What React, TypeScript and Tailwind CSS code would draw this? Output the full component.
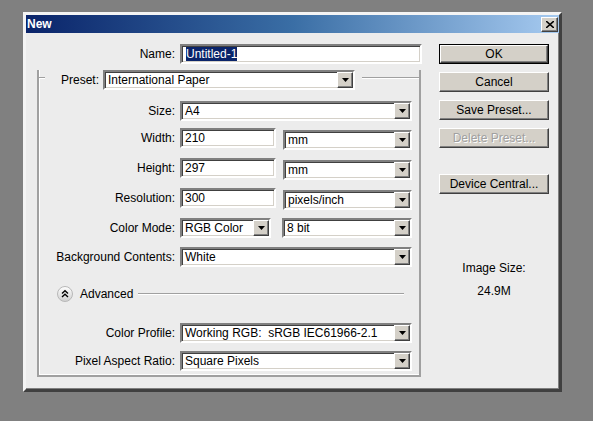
import React from 'react';

const font = 'font-["Liberation_Sans",Arial,sans-serif] text-[12px] leading-[14px] text-black';

const sunken =
  'border-2 border-t-[#808080] border-l-[#808080] border-r-white border-b-white shadow-[inset_1px_1px_0_#404040,inset_-1px_-1px_0_#d4d0c8] bg-white';

const raised =
  'bg-[#d4d0c8] border border-t-white border-l-white border-r-[#404040] border-b-[#404040] shadow-[inset_-1px_-1px_0_#808080]';

function Arrow() {
  return (
    <svg width="7" height="4" viewBox="0 0 7 4">
      <path d="M0 0h7L3.5 4z" fill="#000" />
    </svg>
  );
}

function Combo({ value, width }: { value: string; width: number }) {
  return (
    <div
      className={`${sunken} h-[20px] flex items-center shrink-0`}
      style={{ width }}
    >
      <span className="flex-1 pl-[3px] whitespace-pre overflow-hidden">{value}</span>
      <div className={`${raised} w-[16px] h-[16px] flex items-center justify-center`}>
        <Arrow />
      </div>
    </div>
  );
}

function TextBox({ value, width }: { value: string; width: number }) {
  return (
    <div className={`${sunken} h-[20px] flex items-center pl-[3px] shrink-0`} style={{ width }}>
      {value}
    </div>
  );
}

function Label({ text, width }: { text: string; width: number }) {
  return (
    <span className="shrink-0 text-right pr-[5px] whitespace-nowrap" style={{ width }}>
      {text}
    </span>
  );
}

function Row({ label, children, top }: { label: string; children: React.ReactNode; top: string }) {
  return (
    <div className={`flex items-start ${top}`}>
      <div className="h-[20px] flex items-center">
        <Label text={label} width={141} />
      </div>
      {children}
    </div>
  );
}

function Btn({ label, disabled, primary, className = '' }: { label: string; disabled?: boolean; primary?: boolean; className?: string }) {
  return (
    <div className={`w-[110px] h-[20px] ${primary ? 'border border-black' : ''} ${className}`}>
      <div className={`${raised} h-full w-full flex items-center justify-center`}>
        <span className={disabled ? 'text-[#a0a0a0] [text-shadow:1px_1px_0_#fff]' : ''}>{label}</span>
      </div>
    </div>
  );
}

function AdvancedIcon() {
  return (
    <svg width="16" height="16" viewBox="0 0 16 16">
      <defs>
        <linearGradient id="adv" x1="0" y1="0" x2="0" y2="1">
          <stop offset="0" stopColor="#ffffff" />
          <stop offset="1" stopColor="#cfcfcf" />
        </linearGradient>
      </defs>
      <circle cx="8" cy="8" r="7.5" fill="url(#adv)" stroke="#b8b8b8" />
      <path d="M5 7.5L8 4.8 11 7.5M5 11L8 8.3 11 11" fill="none" stroke="#000" strokeWidth="1.4" />
    </svg>
  );
}

export default function App() {
  return (
    <div className={`w-[593px] h-[421px] bg-[#808080] pt-[12px] pl-[23px] ${font}`}>
      <div className="w-[539px] h-[380px] bg-[#ececec] border-[3px] border-t-[#f4f4f4] border-l-[#f4f4f4] border-r-[#404040] border-b-[#404040] shadow-[inset_-1px_-1px_0_#808080] flex flex-col">
        {/* title bar */}
        <div className="h-[18px] shrink-0 bg-[linear-gradient(to_right,#0a246a,#3a6ea5_50%,#a6caf0)] flex items-center justify-between pl-[1px] pr-[1px]">
          <span className="text-white font-bold">New</span>
          <div className={`${raised} w-[17px] h-[15px] flex items-center justify-center`}>
            <svg width="8" height="7" viewBox="0 0 8 7">
              <path d="M0 0l8 7M8 0L0 7" stroke="#000" strokeWidth="1.6" />
            </svg>
          </div>
        </div>

        <div className="flex flex-1">
          {/* left column */}
          <div className="pl-[11px] pt-[11px] w-[395px] shrink-0">
            <div className="flex items-center h-[20px]">
              <Label text="Name:" width={143} />
              <div className={`${sunken} h-[20px] w-[242px] shrink-0 flex items-center pl-[4px]`}>
                <span className="bg-[#0a246a] text-white leading-[14px]">Untitled-1</span>
              </div>
            </div>

            {/* preset group */}
            <div className="mt-[13px] w-[384px] border-2 border-t-0 border-l-[#a0a0a0] border-b-[#a0a0a0] border-r-[#a0a0a0] shadow-[inset_1px_0_0_#fff,inset_0_-1px_0_#fff] pb-[4px]">
              <div className="flex items-start -mt-[7px] h-[20px]">
                <span className="w-[6px] mt-[7px] h-[2px] border-t border-t-[#a0a0a0] border-b border-b-white" />
                <span className="w-[58px] h-[20px] flex items-center justify-end pr-[4px]">Preset:</span>
                <Combo value="International Paper" width={252} />
                <span className="flex-1 ml-[7px] mt-[7px] h-[2px] border-t border-t-[#a0a0a0] border-b border-b-white" />
              </div>

              <Row label="Size:" top="mt-[11px]">
                <Combo value="A4" width={232} />
              </Row>
              <Row label="Width:" top="mt-[7px]">
                <TextBox value="210" width={96} />
                <div className="ml-[7px] mt-[2px]">
                  <Combo value="mm" width={129} />
                </div>
              </Row>
              <Row label="Height:" top="mt-[8px]">
                <TextBox value="297" width={96} />
                <div className="ml-[7px] mt-[2px]">
                  <Combo value="mm" width={129} />
                </div>
              </Row>
              <Row label="Resolution:" top="mt-[8px]">
                <TextBox value="300" width={96} />
                <div className="ml-[7px] mt-[2px]">
                  <Combo value="pixels/inch" width={129} />
                </div>
              </Row>
              <Row label="Color Mode:" top="mt-[8px]">
                <Combo value="RGB Color" width={91} />
                <div className="ml-[11px]">
                  <Combo value="8 bit" width={130} />
                </div>
              </Row>
              <Row label="Background Contents:" top="mt-[9px]">
                <Combo value="White" width={232} />
              </Row>

              <div className="flex items-center mt-[19px] h-[16px] pl-[18px] pr-[15px]">
                <AdvancedIcon />
                <span className="ml-[7px]">Advanced</span>
                <span className="flex-1 ml-[5px] h-[2px] border-t border-t-[#a0a0a0] border-b border-b-white" />
              </div>

              <Row label="Color Profile:" top="mt-[21px]">
                <Combo value="Working RGB:  sRGB IEC61966-2.1" width={232} />
              </Row>
              <Row label="Pixel Aspect Ratio:" top="mt-[8px]">
                <Combo value="Square Pixels" width={232} />
              </Row>
            </div>
          </div>

          {/* right column */}
          <div className="ml-[18px] pt-[11px] w-[110px] shrink-0 flex flex-col">
            <Btn label="OK" primary />
            <Btn label="Cancel" className="mt-[8px]" />
            <Btn label="Save Preset..." className="mt-[8px]" />
            <Btn label="Delete Preset..." disabled className="mt-[8px]" />
            <Btn label="Device Central..." className="mt-[26px]" />
            <div className="mt-[67px] text-center">Image Size:</div>
            <div className="mt-[9px] text-center">24.9M</div>
          </div>
        </div>
      </div>
    </div>
  );
}
